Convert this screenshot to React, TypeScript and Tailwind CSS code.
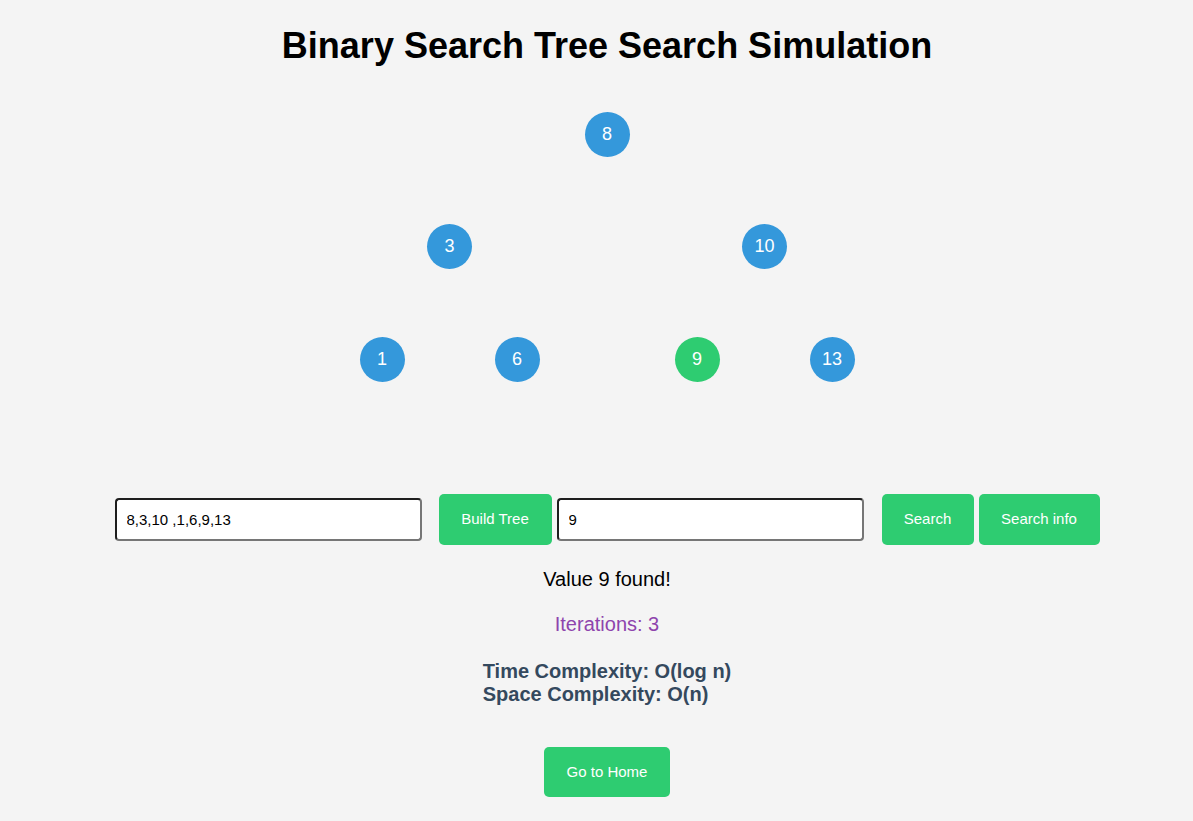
import { useState } from "react";

type TreeNode = { value: number; x: number; y: number };

// centres relative to the tree area, root sits on the page axis
const nodes: TreeNode[] = [
  { value: 8, x: 0, y: 68 },
  { value: 3, x: -157.5, y: 180 },
  { value: 10, x: 157.5, y: 180 },
  { value: 1, x: -225, y: 293 },
  { value: 6, x: -90, y: 293 },
  { value: 9, x: 90, y: 293 },
  { value: 13, x: 225, y: 293 },
];

const inputCls =
  "h-[43px] w-[307px] rounded-[4px] border-2 border-t-[#1e1e1e] border-l-[#1e1e1e] border-r-[#767676] border-b-[#767676] bg-white pl-[10px] text-[15px] text-black outline-none";

const btnCls =
  "h-[51px] rounded-[5px] bg-[#2ecc71] text-[15px] text-white";

export default function App() {
  const [values, setValues] = useState("8,3,10 ,1,6,9,13");
  const [target, setTarget] = useState("9");
  const found = 9;

  return (
    <div className="min-h-[821px] bg-[#f4f4f4] pl-[21px] font-['Liberation_Sans',Arial,sans-serif]">
      <div className="flex flex-col items-center">
        <h1 className="mt-[25px] text-[36px] leading-[41px] font-bold text-black">
          Binary Search Tree Search Simulation
        </h1>

        <div className="relative h-[428px] w-full">
          {nodes.map((n) => (
            <div
              key={n.value}
              className={`absolute flex h-[45px] w-[45px] items-center justify-center rounded-full text-[18px] text-white ${
                n.value === found ? "bg-[#2ecc71]" : "bg-[#3498db]"
              }`}
              style={{ left: `calc(50% + ${n.x - 22.5}px)`, top: n.y - 22.5 }}
            >
              {n.value}
            </div>
          ))}
        </div>

        <div className="flex items-center">
          <input
            className={inputCls}
            value={values}
            onChange={(e) => setValues(e.target.value)}
          />
          <button className={`${btnCls} ml-[17px] w-[113px]`}>Build Tree</button>
          <input
            className={`${inputCls} ml-[5px]`}
            value={target}
            onChange={(e) => setTarget(e.target.value)}
          />
          <button className={`${btnCls} ml-[18px] w-[92px]`}>Search</button>
          <button className={`${btnCls} ml-[5px] w-[121px]`}>Search info</button>
        </div>

        <p className="mt-[23px] text-[20px] leading-[23px] text-black">
          Value 9 found!
        </p>
        <p className="mt-[22px] text-[20px] leading-[23px] text-[#8e44ad]">
          Iterations: 3
        </p>

        <div className="mt-[24px] text-left text-[20px] leading-[23px] font-bold text-[#34495e]">
          <div>Time Complexity: O(log n)</div>
          <div>Space Complexity: O(n)</div>
        </div>

        <button className="mt-[41px] h-[50px] w-[126px] rounded-[5px] bg-[#2ecc71] text-[15px] text-white">
          Go to Home
        </button>
      </div>
    </div>
  );
}
